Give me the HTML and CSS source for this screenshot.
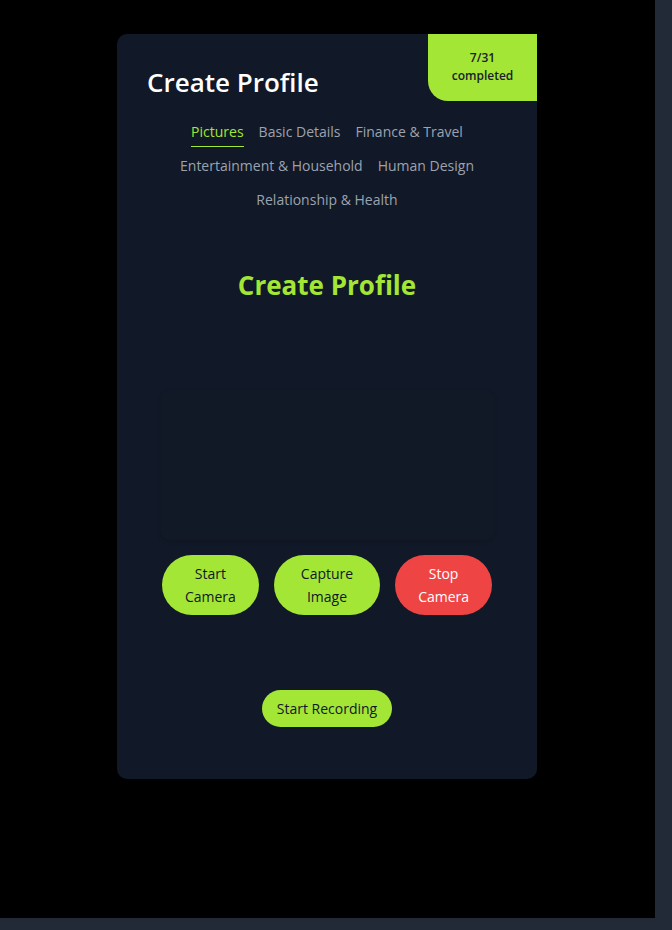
FILE: index.html
```html
<!DOCTYPE html>
<html>
<head>
    <meta charset="UTF-8">
    <title>Create Profile</title>
    <link rel="stylesheet" href="styles.css">
</head>
<body>
<div class="screen">
    <div class="card">
        <div class="badge">7/31<br>completed</div>

        <h1 class="card_title">Create Profile</h1>

        <!--tabs-->
        <div class="tabs">
            <span class="tab active">Pictures</span>
            <span class="tab">Basic Details</span>
            <span class="tab">Finance &amp; Travel</span>
            <span class="tab">Entertainment &amp; Household</span>
            <span class="tab">Human Design</span>
            <span class="tab">Relationship &amp; Health</span>
        </div>

        <h2 class="section_title">Create Profile</h2>

        <div class="video_box"></div>

        <div class="cam_btns">
            <button class="btn btn_cam">Start<br>Camera</button>
            <button class="btn btn_cam btn_capture">Capture<br>Image</button>
            <button class="btn btn_cam btn_stop">Stop<br>Camera</button>
        </div>

        <div class="rec_row">
            <button class="btn btn_rec">Start Recording</button>
        </div>
    </div>
</div>
</body>
</html>
```

FILE: styles.css
```css
* {
    margin: 0px;
    padding: 0px;
    box-sizing: border-box;
}

body {
    background-color: #222a38;
    font-family: "Open Sans", "Noto Sans", sans-serif;
    width: 672px;
    height: 930px;
    overflow: hidden;
}

.screen {
    width: 655px;
    height: 918px;
    background-color: #000000;
    padding-top: 34px;
    padding-left: 117px;
}

.card {
    position: relative;
    width: 420px;
    height: 745px;
    background-color: #111827;
    border-radius: 10px;
    padding: 30px 30px;
}

/*右上角完成度*/
.badge {
    position: absolute;
    top: 0;
    right: 0;
    width: 109px;
    height: 67px;
    background-color: #a3e635;
    border-bottom-left-radius: 20px;
    color: #1a202c;
    font-size: 12px;
    font-weight: 600;
    line-height: 18px;
    text-align: center;
    padding-top: 15px;
}

.card_title {
    color: #ffffff;
    font-size: 26px;
    font-weight: 600;
    line-height: 36px;
}

.tabs {
    margin-top: 22px;
    display: flex;
    flex-wrap: wrap;
    justify-content: center;
    column-gap: 15px;
    row-gap: 9px;
}

.tab {
    color: #9ca3af;
    font-size: 14px;
    line-height: 20px;
    padding-bottom: 4px;
    border-bottom: 1px solid transparent;
}

.tab.active {
    color: #a3e635;
    border-bottom-color: #a3e635;
}

.section_title {
    margin-top: 53px;
    color: #a3e635;
    font-size: 26px;
    font-weight: 700;
    line-height: 34px;
    text-align: center;
}

.video_box {
    width: 333px;
    height: 150px;
    margin: 88px auto 0;
    border-radius: 8px;
    background-color: #111826;
    box-shadow: 0 2px 4px rgba(0, 0, 0, 0.12);
}

.cam_btns {
    margin-top: 15px;
    display: flex;
    justify-content: center;
    gap: 15px;
}

.btn {
    border: none;
    border-radius: 9999px;
    background-color: #a3e635;
    color: #111827;
    font-family: "Open Sans", "Noto Sans", sans-serif;
    font-size: 14px;
    line-height: 23px;
}

.btn_cam {
    padding: 7px 23px;
}

.btn_capture {
    padding: 7px 27px;
}

.btn_stop {
    background-color: #ef4444;
    color: #ffffff;
}

.rec_row {
    margin-top: 75px;
    display: flex;
    justify-content: center;
}

.btn_rec {
    padding: 7px 15px;
}
```
